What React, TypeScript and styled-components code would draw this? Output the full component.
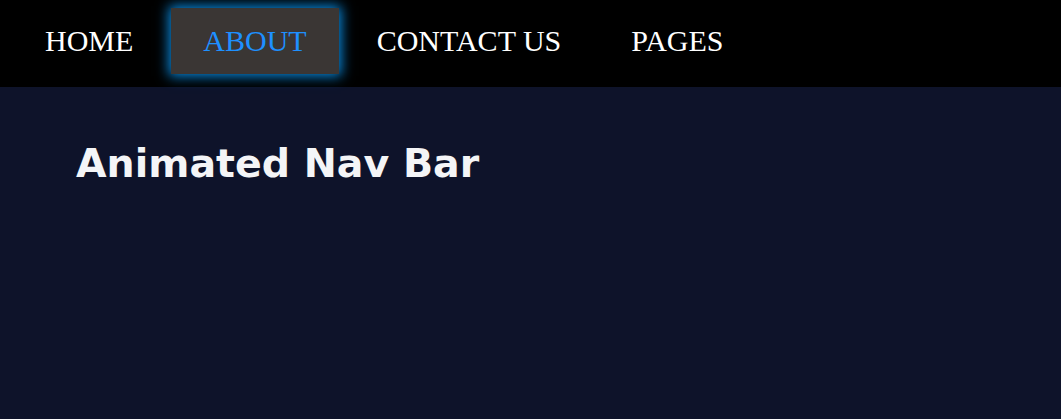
import React from "react";
import styled, { createGlobalStyle } from "styled-components";

const Global = createGlobalStyle`
  html, body { margin: 0; padding: 0; background: #0e132a; }
  body { font-family: "Liberation Serif", "Times New Roman", serif; }
`;

const Nav = styled.nav`
  background: #000;
  height: 87px;
  display: flex;
  align-items: flex-start;
  padding: 8px 0 0 13px;
  box-sizing: border-box;
`;

const Menu = styled.ul`
  list-style: none;
  margin: 0;
  padding: 0;
  display: flex;
  gap: 6px;
`;

const Item = styled.li<{ $active?: boolean }>`
  padding: 15px 32px 16px;
  font-size: 30px;
  line-height: 35px;
  color: ${(p) => (p.$active ? "#1e90ff" : "#fff")};
  background: ${(p) => (p.$active ? "#3a3634" : "transparent")};
  box-shadow: ${(p) => (p.$active ? "0 0 12px 2px #0a8fe6" : "none")};
  cursor: pointer;
`;

const Main = styled.main`
  padding: 53px 76px;
`;

const Title = styled.h1`
  margin: 0;
  font-family: "DejaVu Sans", sans-serif;
  font-weight: 700;
  font-size: 39.5px;
  line-height: 47px;
  color: #f4f5f7;
`;

export default function App() {
  const items = ["HOME", "ABOUT", "CONTACT US", "PAGES"];
  return (
    <>
      <Global />
      <Nav>
        <Menu>
          {items.map((it) => (
            <Item key={it} $active={it === "ABOUT"}>
              {it}
            </Item>
          ))}
        </Menu>
      </Nav>
      <Main>
        <Title>Animated Nav Bar</Title>
      </Main>
    </>
  );
}
